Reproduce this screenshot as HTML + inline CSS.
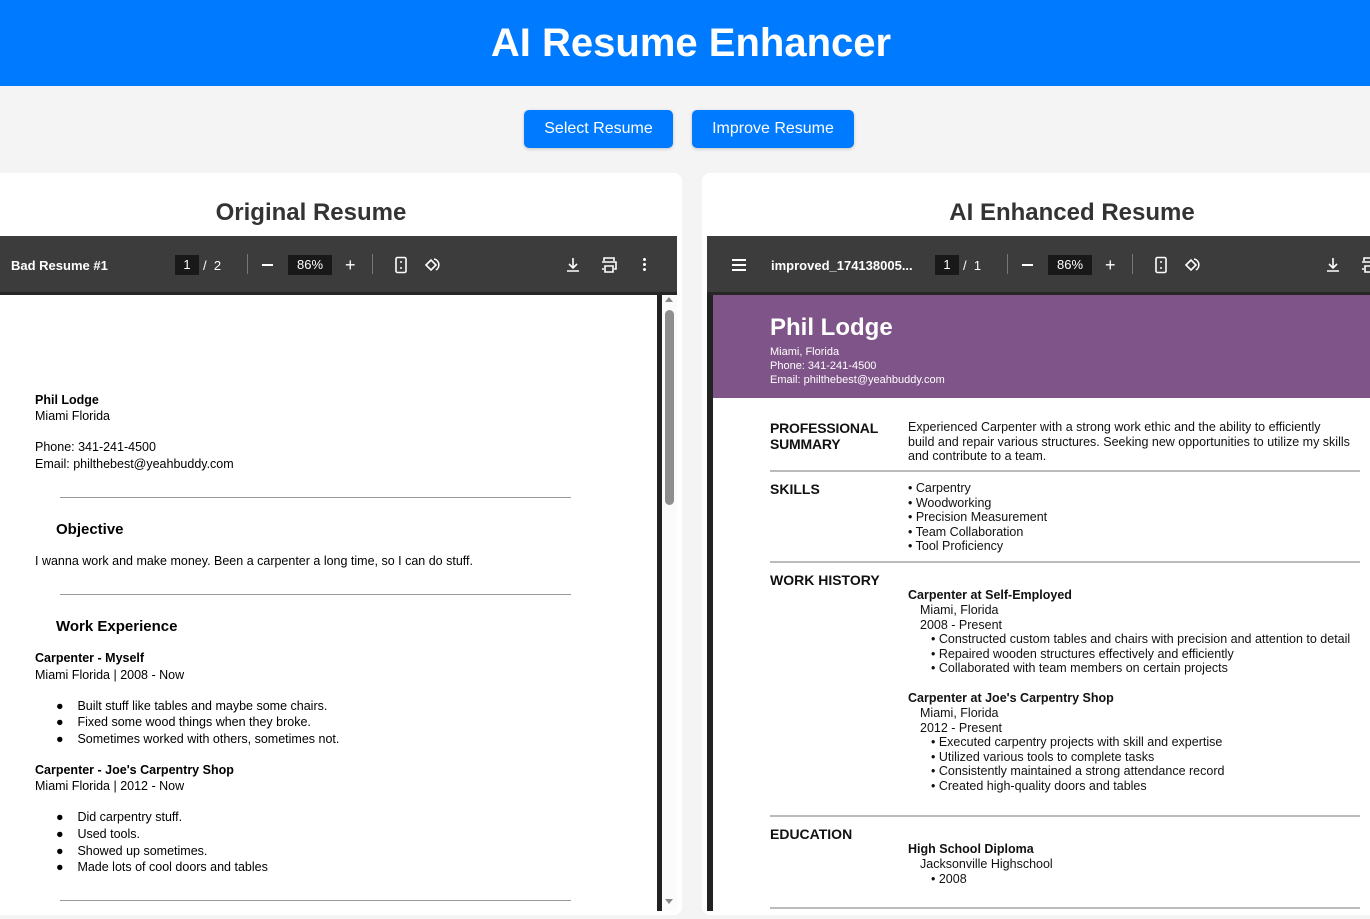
<!DOCTYPE html>
<html><head><meta charset="utf-8"><style>
*{margin:0;padding:0;box-sizing:border-box}
body{width:1370px;height:919px;overflow:hidden;background:#f4f4f4;font-family:"Liberation Sans",Arial,sans-serif;position:relative}
.a{position:absolute;white-space:nowrap}
.hdr{left:0;top:1px;width:1370px;height:85px;padding-left:12px;background:#007bff;color:#fff;font-size:40px;font-weight:bold;text-align:center;line-height:85px}
.btn{background:#007bff;color:#fff;font-size:16px;border-radius:5px;height:38px;line-height:38px;text-align:center;box-shadow:0 1px 3px rgba(0,0,0,.2)}
.panel{background:#fff;border-radius:8px;top:173px;height:742px}
.ttl{font-size:24px;font-weight:bold;color:#333;text-align:center;top:199px}
.tb{background:#3c3c3c;top:236px;height:56px;color:#fff}
.l{font-size:12.5px;color:#000;line-height:16px}
.r{font-size:12.5px;color:#111;line-height:14.5px}
.h{font-size:14px;font-weight:bold;color:#111;line-height:16px}
.hr{height:1px;background:#999}
.hr2{height:2px;background:#bbb}
.ico{stroke:#fff;fill:none;stroke-width:1.6}
</style></head><body>
<div class="a" style="left:0;top:0;width:1370px;height:85px;background:#007bff"></div>
<div class="a hdr">AI Resume Enhancer</div>
<div class="a btn" style="left:524px;top:110px;width:149px">Select Resume</div>
<div class="a btn" style="left:692px;top:110px;width:162px">Improve Resume</div>

<div class="a panel" style="left:-10px;width:692px"></div>
<div class="a panel" style="left:702px;width:680px"></div>
<div class="a ttl" style="left:0;width:622px">Original Resume</div>
<div class="a ttl" style="left:772px;width:600px">AI Enhanced Resume</div>

<!-- left viewer -->
<div class="a tb" style="left:0;width:677px"></div>
<div class="a" style="left:0;top:292px;width:677px;height:3px;background:#262626"></div>
<div class="a" style="left:0;top:295px;width:657px;height:616px;background:#fff"></div>
<div class="a" style="left:657px;top:295px;width:5px;height:616px;background:#222"></div>
<div class="a" style="left:662px;top:295px;width:15px;height:616px;background:#fbfbfb"></div>
<div class="a" style="left:665px;top:310px;width:9px;height:195px;background:#8e8e8e;border-radius:5px"></div>
<div class="a" style="left:665px;top:297px;width:0;height:0;border-left:4px solid transparent;border-right:4px solid transparent;border-bottom:5px solid #888"></div>
<div class="a" style="left:665px;top:899px;width:0;height:0;border-left:4px solid transparent;border-right:4px solid transparent;border-top:5px solid #888"></div>
<div class="a" style="left:11px;top:258px;font-size:13px;font-weight:bold;color:#fff">Bad Resume #1</div>
<div class="a" style="left:175px;top:255px;width:24px;height:20px;background:#191919;color:#fff;font-size:13px;text-align:center;line-height:20px">1</div>
<div class="a" style="left:203px;top:258px;font-size:13px;color:#fff">/&nbsp;&nbsp;2</div>
<div class="a" style="left:247px;top:254px;width:1px;height:20px;background:#777"></div>
<div class="a" style="left:262px;top:264px;width:11px;height:2px;background:#fff"></div>
<div class="a" style="left:288px;top:255px;width:44px;height:20px;background:#191919;color:#fff;font-size:13px;text-align:center;line-height:20px">86%</div>
<div class="a" style="left:345px;top:256px;font-size:18px;color:#fff;line-height:18px">+</div>
<div class="a" style="left:372px;top:254px;width:1px;height:20px;background:#777"></div>
<svg class="a" style="left:392px;top:256px" width="18" height="18"><rect class="ico" x="4" y="1.5" width="10" height="15" rx="1.5"/><path d="M9 5v2M9 11v2" stroke="#fff" stroke-width="1.5"/></svg>
<svg class="a" style="left:423px;top:256px" width="20" height="18"><path class="ico" d="M3 9l5-5 5 5-5 5z"/><path class="ico" d="M11 3a6 6 0 0 1 2 11"/></svg>
<svg class="a" style="left:565px;top:256px" width="16" height="18"><path class="ico" d="M8 2v10M4 8l4 4 4-4M2 15h12"/></svg>
<svg class="a" style="left:599px;top:256px" width="20" height="18"><path class="ico" d="M5 5V2h10v3M3 6h14v7h-2M5 13H3M6 10h8v6H6z"/></svg>
<div class="a" style="left:643px;top:258px;width:3px;height:3px;background:#fff;box-shadow:0 5px #fff,0 10px #fff;border-radius:50%"></div>

<div class="a l" style="left:35px;top:392px;font-weight:bold">Phil Lodge</div>
<div class="a l" style="left:35px;top:408px">Miami Florida</div>
<div class="a l" style="left:35px;top:439px">Phone: 341-241-4500</div>
<div class="a l" style="left:35px;top:456px">Email: philthebest@yeahbuddy.com</div>
<div class="a hr" style="left:60px;top:497px;width:511px"></div>
<div class="a" style="left:56px;top:521px;font-size:15px;font-weight:bold">Objective</div>
<div class="a l" style="left:35px;top:553px">I wanna work and make money. Been a carpenter a long time, so I can do stuff.</div>
<div class="a hr" style="left:60px;top:594px;width:511px"></div>
<div class="a" style="left:56px;top:618px;font-size:15px;font-weight:bold">Work Experience</div>
<div class="a l" style="left:35px;top:650px;font-weight:bold">Carpenter - Myself</div>
<div class="a l" style="left:35px;top:667px">Miami Florida | 2008 - Now</div>
<div class="a l" style="left:56px;top:698px">●&nbsp;&nbsp;&nbsp; Built stuff like tables and maybe some chairs.</div>
<div class="a l" style="left:56px;top:714px">●&nbsp;&nbsp;&nbsp; Fixed some wood things when they broke.</div>
<div class="a l" style="left:56px;top:731px">●&nbsp;&nbsp;&nbsp; Sometimes worked with others, sometimes not.</div>
<div class="a l" style="left:35px;top:762px;font-weight:bold">Carpenter - Joe's Carpentry Shop</div>
<div class="a l" style="left:35px;top:778px">Miami Florida | 2012 - Now</div>
<div class="a l" style="left:56px;top:809px">●&nbsp;&nbsp;&nbsp; Did carpentry stuff.</div>
<div class="a l" style="left:56px;top:826px">●&nbsp;&nbsp;&nbsp; Used tools.</div>
<div class="a l" style="left:56px;top:843px">●&nbsp;&nbsp;&nbsp; Showed up sometimes.</div>
<div class="a l" style="left:56px;top:859px">●&nbsp;&nbsp;&nbsp; Made lots of cool doors and tables</div>
<div class="a hr" style="left:60px;top:900px;width:511px"></div>

<!-- right viewer -->
<div class="a tb" style="left:707px;width:663px"></div>
<div class="a" style="left:707px;top:292px;width:663px;height:3px;background:#262626"></div>
<div class="a" style="left:707px;top:295px;width:6px;height:616px;background:#222"></div>
<div class="a" style="left:713px;top:295px;width:657px;height:616px;background:#fff"></div>
<div class="a" style="left:732px;top:259px;width:14px;height:2px;background:#fff;box-shadow:0 5px #fff,0 10px #fff"></div>
<div class="a" style="left:771px;top:258px;font-size:13px;font-weight:bold;color:#fff">improved_174138005...</div>
<div class="a" style="left:935px;top:255px;width:24px;height:20px;background:#191919;color:#fff;font-size:13px;text-align:center;line-height:20px">1</div>
<div class="a" style="left:963px;top:258px;font-size:13px;color:#fff">/&nbsp;&nbsp;1</div>
<div class="a" style="left:1007px;top:254px;width:1px;height:20px;background:#777"></div>
<div class="a" style="left:1022px;top:264px;width:11px;height:2px;background:#fff"></div>
<div class="a" style="left:1048px;top:255px;width:44px;height:20px;background:#191919;color:#fff;font-size:13px;text-align:center;line-height:20px">86%</div>
<div class="a" style="left:1105px;top:256px;font-size:18px;color:#fff;line-height:18px">+</div>
<div class="a" style="left:1132px;top:254px;width:1px;height:20px;background:#777"></div>
<svg class="a" style="left:1152px;top:256px" width="18" height="18"><rect class="ico" x="4" y="1.5" width="10" height="15" rx="1.5"/><path d="M9 5v2M9 11v2" stroke="#fff" stroke-width="1.5"/></svg>
<svg class="a" style="left:1183px;top:256px" width="20" height="18"><path class="ico" d="M3 9l5-5 5 5-5 5z"/><path class="ico" d="M11 3a6 6 0 0 1 2 11"/></svg>
<svg class="a" style="left:1325px;top:256px" width="16" height="18"><path class="ico" d="M8 2v10M4 8l4 4 4-4M2 15h12"/></svg>
<svg class="a" style="left:1359px;top:256px" width="20" height="18"><path class="ico" d="M5 5V2h10v3M3 6h14v7h-2M5 13H3M6 10h8v6H6z"/></svg>

<div class="a" style="left:713px;top:295px;width:657px;height:103px;background:#7f5488"></div>
<div class="a" style="left:770px;top:314px;font-size:24px;font-weight:bold;color:#fff">Phil Lodge</div>
<div class="a" style="left:770px;top:345px;font-size:11px;color:#fff;line-height:14px">Miami, Florida<br>Phone: 341-241-4500<br>Email: philthebest@yeahbuddy.com</div>

<div class="a h" style="left:770px;top:420px;letter-spacing:-0.2px">PROFESSIONAL<br>SUMMARY</div>
<div class="a r" style="left:908px;top:420px">Experienced Carpenter with a strong work ethic and the ability to efficiently<br>build and repair various structures. Seeking new opportunities to utilize my skills<br>and contribute to a team.</div>
<div class="a hr2" style="left:770px;top:470px;width:590px"></div>
<div class="a h" style="left:770px;top:481px">SKILLS</div>
<div class="a r" style="left:908px;top:481px">• Carpentry<br>• Woodworking<br>• Precision Measurement<br>• Team Collaboration<br>• Tool Proficiency</div>
<div class="a hr2" style="left:770px;top:561px;width:590px"></div>
<div class="a h" style="left:770px;top:572px">WORK HISTORY</div>
<div class="a r" style="left:908px;top:588px;font-weight:bold">Carpenter at Self-Employed</div>
<div class="a r" style="left:920px;top:603px">Miami, Florida<br>2008 - Present</div>
<div class="a r" style="left:931px;top:632px">• Constructed custom tables and chairs with precision and attention to detail<br>• Repaired wooden structures effectively and efficiently<br>• Collaborated with team members on certain projects</div>
<div class="a r" style="left:908px;top:691px;font-weight:bold">Carpenter at Joe's Carpentry Shop</div>
<div class="a r" style="left:920px;top:706px">Miami, Florida<br>2012 - Present</div>
<div class="a r" style="left:931px;top:735px">• Executed carpentry projects with skill and expertise<br>• Utilized various tools to complete tasks<br>• Consistently maintained a strong attendance record<br>• Created high-quality doors and tables</div>
<div class="a hr2" style="left:770px;top:815px;width:590px"></div>
<div class="a h" style="left:770px;top:826px">EDUCATION</div>
<div class="a r" style="left:908px;top:842px;font-weight:bold">High School Diploma</div>
<div class="a r" style="left:920px;top:857px">Jacksonville Highschool</div>
<div class="a r" style="left:931px;top:872px">• 2008</div>
<div class="a hr2" style="left:770px;top:907px;width:590px"></div>
</body></html>
